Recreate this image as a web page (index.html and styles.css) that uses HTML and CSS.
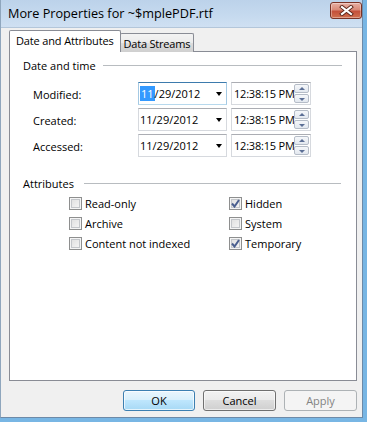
FILE: index.html
```html
<!DOCTYPE html>
<html>
<head>
<meta charset="utf-8">
<link rel="stylesheet" href="styles.css">
</head>
<body>
<div class="window">
  <div class="titlebar">
    <span class="title">More Properties for ~$mplePDF.rtf</span>
    <div class="close">
      <svg width="15" height="11" viewBox="0 0 15 11">
        <path d="M3 2 L12 9 M12 2 L3 9" stroke="#5a2418" stroke-width="4" stroke-linecap="square"/>
        <path d="M3 2 L12 9 M12 2 L3 9" stroke="#ffffff" stroke-width="2.2" stroke-linecap="square"/>
      </svg>
    </div>
  </div>
  <div class="client">
    <div class="tabs">
      <div class="tab active">Date and Attributes</div>
      <div class="tab">Data Streams</div>
    </div>
    <div class="panel">
      <div class="group-header"><span>Date and time</span><div class="rule"></div></div>
      <div class="dt-grid">
        <div class="lbl">Modified:</div>
        <div class="combo focused"><span class="val"><span class="sel">11</span>/29/2012</span><span class="arrow"></span></div>
        <div class="time"><span class="val">12:38:15 PM</span><div class="spin"><span class="sb up"></span><span class="sb down"></span></div></div>

        <div class="lbl">Created:</div>
        <div class="combo"><span class="val">11/29/2012</span><span class="arrow"></span></div>
        <div class="time"><span class="val">12:38:15 PM</span><div class="spin"><span class="sb up"></span><span class="sb down"></span></div></div>

        <div class="lbl">Accessed:</div>
        <div class="combo"><span class="val">11/29/2012</span><span class="arrow"></span></div>
        <div class="time"><span class="val">12:38:15 PM</span><div class="spin"><span class="sb up"></span><span class="sb down"></span></div></div>
      </div>
      <div class="group-header attrs"><span>Attributes</span><div class="rule"></div></div>
      <div class="cb-grid">
        <div class="cb"><span class="box"></span>Read-only</div>
        <div class="cb"><span class="box checked"><svg width="9" height="9" viewBox="0 0 9 9"><path d="M1 4.5 L3.5 7.5 L8 1" fill="none" stroke="#4a5f8f" stroke-width="2"/></svg></span>Hidden</div>
        <div class="cb"><span class="box"></span>Archive</div>
        <div class="cb"><span class="box"></span>System</div>
        <div class="cb"><span class="box"></span>Content not indexed</div>
        <div class="cb"><span class="box checked"><svg width="9" height="9" viewBox="0 0 9 9"><path d="M1 4.5 L3.5 7.5 L8 1" fill="none" stroke="#4a5f8f" stroke-width="2"/></svg></span>Temporary</div>
      </div>
    </div>
    <div class="buttons">
      <div class="btn default">OK</div>
      <div class="btn">Cancel</div>
      <div class="btn disabled">Apply</div>
    </div>
  </div>
</div>
</body>
</html>
```

FILE: styles.css
```css
* { box-sizing: border-box; }
html, body { margin: 0; padding: 0; }
body {
  background: #78b6e4;
  width: 367px;
  height: 422px;
  overflow: hidden;
  font-family: "Open Sans", "Noto Sans", sans-serif;
  font-size: 11px;
  color: #000;
}
.window {
  width: 363px;
  height: 418px;
  background: #f0f0f0;
  border-left: 1px solid #8fa6bd;
  border-right: 1px solid #6d8aa8;
  border-bottom: 1px solid #6d8aa8;
  display: flex;
  flex-direction: column;
}
.titlebar {
  height: 28px;
  flex: none;
  background: linear-gradient(#bcd2ea, #c6daef 60%, #cfe0f2);
  display: flex;
  align-items: center;
  justify-content: space-between;
  padding-left: 7px;
  border-bottom: 1px solid #b3c6da;
}
.title {
  font-size: 12.7px;
  margin-top: -2px;
  white-space: nowrap;
}
.close {
  width: 32px;
  height: 17px;
  margin-top: -7px;
  border: 1px solid #7a3326;
  border-radius: 3px;
  background: linear-gradient(#e8b0a4, #d98a78 45%, #c4503a 55%, #d0704f);
  display: flex;
  align-items: center;
  justify-content: center;
  box-shadow: inset 0 0 0 1px rgba(255,255,255,0.35);
}
.close svg { display: block; }
.client {
  padding: 2px 0 0 8px;
  flex: 1;
}
.tabs {
  display: flex;
  height: 22px;
  align-items: flex-end;
}
.tab {
  height: 19px;
  padding: 0 3px 0 3px;
  border: 1px solid #898c95;
  border-bottom: none;
  border-radius: 2px 2px 0 0;
  background: linear-gradient(#f3f3f3, #ebebeb 50%, #dddddd 51%, #cfcfcf);
  display: flex;
  align-items: center;
  margin-left: -1px;
  line-height: 1;
  white-space: nowrap;
  letter-spacing: -0.2px;
}
.tab.active {
  height: 22px;
  margin-left: 0;
  padding: 0 6px 2px 6px;
  background: #fff;
  position: relative;
  z-index: 1;
  letter-spacing: -0.15px;
}
.panel {
  width: 348px;
  height: 330px;
  margin-top: -1px;
  border: 1px solid #898c95;
  background: #fff;
}
.group-header {
  display: flex;
  align-items: center;
  height: 14px;
  margin-top: 6px;
  padding-left: 13px;
  padding-right: 14px;
  white-space: nowrap;
}
.group-header .rule {
  flex: 1;
  height: 1px;
  background: #b8bcc0;
  margin-left: 7px;
  margin-top: 1px;
}
.group-header.attrs { margin-top: 19px; }
.group-header.attrs .rule { margin-left: 10px; margin-right: 1px; }
.dt-grid {
  margin-top: 10px;
  padding-left: 23px;
  display: grid;
  grid-template-columns: 105px 89px 84px;
  grid-auto-rows: 23px;
  row-gap: 3px;
}
.lbl {
  display: flex;
  align-items: center;
  padding-top: 1px;
}
.combo, .time {
  border: 1px solid #d6d9de;
  border-top-color: #abadb3;
  display: flex;
  align-items: center;
  position: relative;
}
.combo.focused {
  border-color: #5a9bd0 #a4c9e3 #b7d9ed #a4c9e3;
  border-top-color: #3d7bad;
}
.combo { padding-left: 1px; }
.time { margin-left: 4px; width: 80px; padding-left: 2px; overflow: hidden; }
.val { white-space: nowrap; }
.sel { background: #3399ff; color: #fff; padding: 0 1px; }
.combo .arrow {
  position: absolute;
  right: 4px;
  top: 9px;
  width: 0; height: 0;
  border-left: 3.5px solid transparent;
  border-right: 3.5px solid transparent;
  border-top: 4px solid #000;
}
.time .val {
  width: 61px;
  overflow: hidden;
  flex: none;
  letter-spacing: -0.2px;
}
.spin {
  position: absolute;
  right: 1px;
  top: 1px;
  width: 15px;
  height: 19px;
  display: flex;
  flex-direction: column;
  gap: 1px;
}
.sb {
  flex: 1;
  border: 1px solid #b5bcc7;
  border-radius: 2px;
  background: linear-gradient(#f5f7fa, #e3e8ef);
  position: relative;
}
.sb::after {
  content: "";
  position: absolute;
  left: 4px;
  top: 2px;
  width: 0; height: 0;
  border-left: 3px solid transparent;
  border-right: 3px solid transparent;
}
.sb.up::after { border-bottom: 3px solid #5c6f95; }
.sb.down::after { border-top: 3px solid #5c6f95; top: 3px; }
.cb-grid {
  margin-top: 3px;
  padding-left: 59px;
  display: grid;
  grid-template-columns: 160px auto;
  grid-auto-rows: 20px;
}
.cb {
  display: flex;
  align-items: center;
  gap: 3px;
}
.box {
  width: 13px;
  height: 13px;
  flex: none;
  border: 1px solid #8e8f8f;
  background: linear-gradient(135deg, #dcdcdc, #f8f8f8);
  box-shadow: inset 0 0 0 1px #f4f4f4, inset 0 0 0 2px #c3c6ca;
  display: flex;
  align-items: center;
  justify-content: center;
}
.box.checked svg { display: block; }
.buttons {
  width: 348px;
  margin-top: 9px;
  display: flex;
  justify-content: flex-end;
  gap: 8px;
}
.btn {
  width: 73px;
  height: 21px;
  border: 1px solid #707070;
  border-radius: 3px;
  background: linear-gradient(#f2f2f2, #ebebeb 45%, #dddddd 50%, #cfcfcf);
  box-shadow: inset 0 0 0 1px rgba(255,255,255,0.6);
  display: flex;
  align-items: center;
  justify-content: center;
}
.btn.default {
  width: 72px;
  border-color: #3c7fb1;
  background: linear-gradient(#eaf6fd, #d9f0fc 45%, #bee6fd 50%, #a7d9f5);
  box-shadow: inset 0 0 0 1px rgba(255,255,255,0.7);
}
.btn.disabled {
  border-color: #adb2b5;
  background: #f4f4f4;
  color: #838383;
  box-shadow: none;
}
```
